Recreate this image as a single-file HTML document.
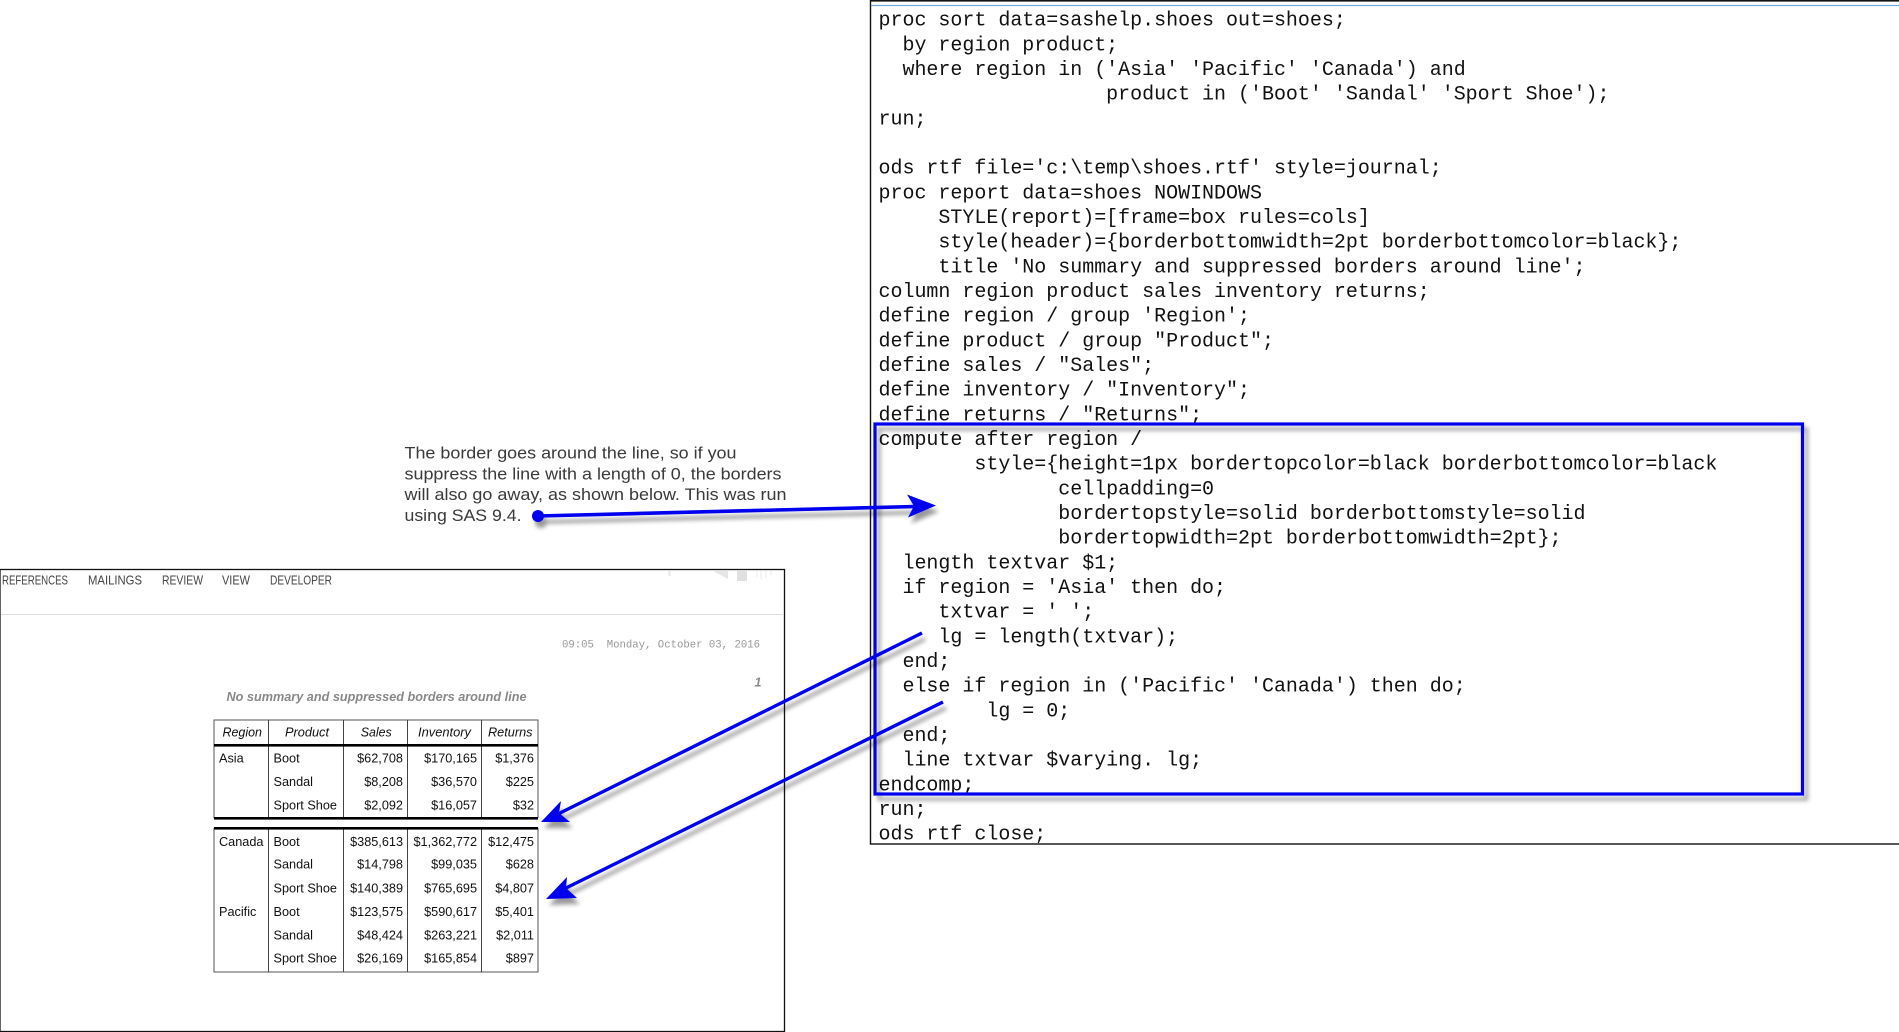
<!DOCTYPE html>
<html>
<head>
<meta charset="utf-8">
<style>
html,body{margin:0;padding:0;background:#fff;width:1899px;height:1032px;overflow:hidden}
svg{display:block;position:absolute;left:0;top:0}
.c{font-family:"Liberation Mono",monospace;font-size:19.98px;fill:#111;white-space:pre}
.t{font-family:"Liberation Sans",Arial,sans-serif;font-size:12.7px;fill:#111}
.h{font-style:italic}
.e{text-anchor:end}
.m{font-family:"Liberation Sans",Arial,sans-serif;font-size:12.5px;fill:#444}
.n{font-family:"Liberation Sans",Arial,sans-serif;font-size:16.5px;fill:#3a3a3a}
</style>
</head>
<body>
<svg width="1899" height="1032" viewBox="0 0 1899 1032" xmlns="http://www.w3.org/2000/svg">
<defs>
<filter id="s" x="-10%" y="-10%" width="120%" height="125%" filterUnits="objectBoundingBox">
<feDropShadow dx="4" dy="5" stdDeviation="2" flood-color="#000" flood-opacity=".38"/>
</filter>
<filter id="a" x="-20%" y="-40%" width="140%" height="180%" filterUnits="objectBoundingBox">
<feDropShadow dx="3" dy="6" stdDeviation="2.2" flood-color="#000" flood-opacity=".4"/>
</filter>
</defs>

<!-- code window -->
<rect x="870.5" y="-2" width="1030" height="846" fill="#fff" stroke="#111" stroke-width="1.4"/>
<rect x="871" y="0" width="1028" height="1.6" fill="#111"/>
<line x1="871" y1="5.5" x2="1899" y2="5.5" stroke="#6fa8dc" stroke-width="1.3"/>
<g class="c" transform="translate(0,-1.1)">
<text x="878.5" y="26.7" xml:space="preserve">proc sort data=sashelp.shoes out=shoes;</text>
<text x="878.5" y="51.4" xml:space="preserve">  by region product;</text>
<text x="878.5" y="76" xml:space="preserve">  where region in ('Asia' 'Pacific' 'Canada') and</text>
<text x="878.5" y="100.7" xml:space="preserve">                   product in ('Boot' 'Sandal' 'Sport Shoe');</text>
<text x="878.5" y="125.4" xml:space="preserve">run;</text>
<text x="878.5" y="174.7" xml:space="preserve">ods rtf file='c:\temp\shoes.rtf' style=journal;</text>
<text x="878.5" y="199.4" xml:space="preserve">proc report data=shoes NOWINDOWS</text>
<text x="878.5" y="224.1" xml:space="preserve">     STYLE(report)=[frame=box rules=cols]</text>
<text x="878.5" y="248.8" xml:space="preserve">     style(header)={borderbottomwidth=2pt borderbottomcolor=black};</text>
<text x="878.5" y="273.4" xml:space="preserve">     title 'No summary and suppressed borders around line';</text>
<text x="878.5" y="298.1" xml:space="preserve">column region product sales inventory returns;</text>
<text x="878.5" y="322.8" xml:space="preserve">define region / group 'Region';</text>
<text x="878.5" y="347.4" xml:space="preserve">define product / group "Product";</text>
<text x="878.5" y="372.1" xml:space="preserve">define sales / "Sales";</text>
<text x="878.5" y="396.8" xml:space="preserve">define inventory / "Inventory";</text>
<text x="878.5" y="421.4" xml:space="preserve">define returns / "Returns";</text>
<text x="878.5" y="446.1" xml:space="preserve">compute after region /</text>
<text x="878.5" y="470.8" xml:space="preserve">        style={height=1px bordertopcolor=black borderbottomcolor=black</text>
<text x="878.5" y="495.4" xml:space="preserve">               cellpadding=0</text>
<text x="878.5" y="520.1" xml:space="preserve">               bordertopstyle=solid borderbottomstyle=solid</text>
<text x="878.5" y="544.8" xml:space="preserve">               bordertopwidth=2pt borderbottomwidth=2pt};</text>
<text x="878.5" y="569.4" xml:space="preserve">  length textvar $1;</text>
<text x="878.5" y="594.1" xml:space="preserve">  if region = 'Asia' then do;</text>
<text x="878.5" y="618.8" xml:space="preserve">     txtvar = ' ';</text>
<text x="878.5" y="643.4" xml:space="preserve">     lg = length(txtvar);</text>
<text x="878.5" y="668.1" xml:space="preserve">  end;</text>
<text x="878.5" y="692.8" xml:space="preserve">  else if region in ('Pacific' 'Canada') then do;</text>
<text x="878.5" y="717.4" xml:space="preserve">         lg = 0;</text>
<text x="878.5" y="742.1" xml:space="preserve">  end;</text>
<text x="878.5" y="766.8" xml:space="preserve">  line txtvar $varying. lg;</text>
<text x="878.5" y="791.4" xml:space="preserve">endcomp;</text>
<text x="878.5" y="816.1" xml:space="preserve">run;</text>
<text x="878.5" y="840.8" xml:space="preserve">ods rtf close;</text>
</g>
<rect x="875" y="424" width="927.5" height="370" fill="none" stroke="#0000ee" stroke-width="3.2" filter="url(#s)"/>

<!-- note -->
<text class="n" x="404.5" y="458.5" textLength="332" lengthAdjust="spacingAndGlyphs">The border goes around the line, so if you</text>
<text class="n" x="404.5" y="479.5" textLength="377" lengthAdjust="spacingAndGlyphs">suppress the line with a length of 0, the borders</text>
<text class="n" x="404.5" y="500.2" textLength="382" lengthAdjust="spacingAndGlyphs">will also go away, as shown below. This was run</text>
<text class="n" x="404.5" y="520.8" textLength="117" lengthAdjust="spacingAndGlyphs">using SAS 9.4.</text>

<!-- document window -->
<rect x="0" y="569.5" width="784.5" height="462" fill="#fff" stroke="#111" stroke-width="1.3"/>
<line x1="1" y1="614.5" x2="784" y2="614.5" stroke="#ddd" stroke-width="1"/>
<rect x="668" y="571" width="3" height="5" fill="#eee"/>
<polygon points="713,571 728,571 728,579" fill="#e6e6e6"/>
<rect x="737" y="571" width="10" height="10" fill="#e0e0e0"/>
<path d="M757 571v6M761 571v8M766 571v7M771 571v4" stroke="#eee" stroke-width="1.3" fill="none"/>
<text class="m" x="2" y="584.5" textLength="66" lengthAdjust="spacingAndGlyphs">REFERENCES</text>
<text class="m" x="88" y="584.5" textLength="54" lengthAdjust="spacingAndGlyphs">MAILINGS</text>
<text class="m" x="162" y="584.5" textLength="41" lengthAdjust="spacingAndGlyphs">REVIEW</text>
<text class="m" x="222" y="584.5" textLength="28" lengthAdjust="spacingAndGlyphs">VIEW</text>
<text class="m" x="270" y="584.5" textLength="62" lengthAdjust="spacingAndGlyphs">DEVELOPER</text>
<text x="562" y="647.5" textLength="198" lengthAdjust="spacingAndGlyphs" xml:space="preserve" style="font-family:'Liberation Mono',monospace;font-size:10.6px;fill:#999">09:05  Monday, October 03, 2016</text>
<text x="754.5" y="686.5" style="font-family:'Liberation Sans',sans-serif;font-size:12.5px;font-weight:bold;font-style:italic;fill:#888">1</text>
<text x="226.5" y="701" textLength="300" lengthAdjust="spacingAndGlyphs" style="font-family:'Liberation Sans',sans-serif;font-size:12.5px;font-weight:bold;font-style:italic;fill:#888">No summary and suppressed borders around line</text>

<!-- table -->
<rect x="214" y="720" width="324" height="252" fill="none" stroke="#555" stroke-width="1"/>
<path d="M268.5 720V818M343.5 720V818M407.5 720V818M481.5 720V818M268.5 828V972M343.5 828V972M407.5 828V972M481.5 828V972" stroke="#444" stroke-width="1" fill="none"/>
<rect x="213.5" y="818" width="325" height="10" fill="#fff"/>
<rect x="214" y="744" width="324" height="2.6" fill="#000"/>
<rect x="214" y="817" width="324" height="2.6" fill="#000"/>
<rect x="214" y="827" width="324" height="2.6" fill="#000"/>
<g class="t">
<text class="h" x="222.5" y="736.5" textLength="39.5" lengthAdjust="spacingAndGlyphs">Region</text>
<text class="h" x="285" y="736.5" textLength="44" lengthAdjust="spacingAndGlyphs">Product</text>
<text class="h" x="360.7" y="736.5" textLength="31" lengthAdjust="spacingAndGlyphs">Sales</text>
<text class="h" x="418" y="736.5" textLength="53" lengthAdjust="spacingAndGlyphs">Inventory</text>
<text class="h" x="488" y="736.5" textLength="44.5" lengthAdjust="spacingAndGlyphs">Returns</text>

<text x="219" y="762.5">Asia</text>
<text x="273.5" y="762.5">Boot</text><text class="e" x="403" y="762.5">$62,708</text><text class="e" x="477" y="762.5">$170,165</text><text class="e" x="534" y="762.5">$1,376</text>
<text x="273.5" y="786">Sandal</text><text class="e" x="403" y="786">$8,208</text><text class="e" x="477" y="786">$36,570</text><text class="e" x="534" y="786">$225</text>
<text x="273.5" y="809.5">Sport Shoe</text><text class="e" x="403" y="809.5">$2,092</text><text class="e" x="477" y="809.5">$16,057</text><text class="e" x="534" y="809.5">$32</text>

<text x="219" y="846">Canada</text>
<text x="273.5" y="846">Boot</text><text class="e" x="403" y="846">$385,613</text><text class="e" x="477" y="846">$1,362,772</text><text class="e" x="534" y="846">$12,475</text>
<text x="273.5" y="868.5">Sandal</text><text class="e" x="403" y="868.5">$14,798</text><text class="e" x="477" y="868.5">$99,035</text><text class="e" x="534" y="868.5">$628</text>
<text x="273.5" y="892.5">Sport Shoe</text><text class="e" x="403" y="892.5">$140,389</text><text class="e" x="477" y="892.5">$765,695</text><text class="e" x="534" y="892.5">$4,807</text>
<text x="219" y="916">Pacific</text>
<text x="273.5" y="916">Boot</text><text class="e" x="403" y="916">$123,575</text><text class="e" x="477" y="916">$590,617</text><text class="e" x="534" y="916">$5,401</text>
<text x="273.5" y="939.5">Sandal</text><text class="e" x="403" y="939.5">$48,424</text><text class="e" x="477" y="939.5">$263,221</text><text class="e" x="534" y="939.5">$2,011</text>
<text x="273.5" y="962.5">Sport Shoe</text><text class="e" x="403" y="962.5">$26,169</text><text class="e" x="477" y="962.5">$165,854</text><text class="e" x="534" y="962.5">$897</text>
</g>

<!-- arrows -->
<g filter="url(#a)">
<circle cx="538" cy="516" r="6" fill="#0000ee"/>
<line x1="538" y1="516" x2="916" y2="506.5" stroke="#0000ee" stroke-width="3.6"/>
<polygon points="936,505.5 907,494.5 914,506 908,517.5" fill="#0000ee"/>
</g>
<g filter="url(#a)">
<line x1="922" y1="633" x2="558" y2="814" stroke="#0000ee" stroke-width="3.4"/>
<polygon points="541,822 561,801 559,813 570,822" fill="#0000ee"/>
</g>
<g filter="url(#a)">
<line x1="943" y1="702" x2="564" y2="889" stroke="#0000ee" stroke-width="3.4"/>
<polygon points="546,899 567,877 566,888 577,898" fill="#0000ee"/>
</g>
</svg>
</body>
</html>
